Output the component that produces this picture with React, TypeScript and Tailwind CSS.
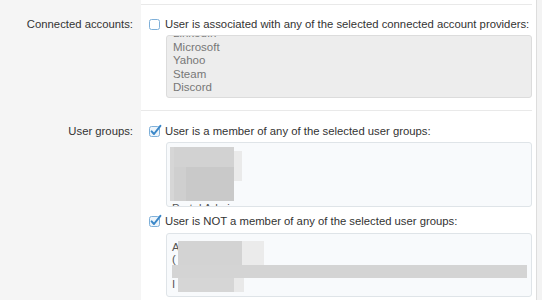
import React from "react";

const font = { fontFamily: '"Liberation Sans", Arial, sans-serif' };

function Check({ checked }: { checked?: boolean }) {
  return (
    <svg width="12" height="12" viewBox="0 0 12 12" className="shrink-0 overflow-visible">
      <rect x="0.5" y="1.5" width="10" height="10" rx="2" fill={checked ? "#eef5fb" : "#ffffff"} stroke="#7fb0d9" />
      {checked && (
        <path d="M2.6 6.4 L5 9 L11.4 0.8" fill="none" stroke="#3b87c8" strokeWidth="2" strokeLinecap="round" strokeLinejoin="round" />
      )}
    </svg>
  );
}

const providers = ["LinkedIn", "Microsoft", "Yahoo", "Steam", "Discord"];

export default function App() {
  return (
    <div className="w-[542px] h-[300px] overflow-hidden flex bg-[#f5f5f5] text-[11.3px] text-[#333]" style={font}>
      <div className="w-[536px] flex flex-col">
        {/* top strip */}
        <div className="flex h-[5px]">
          <div className="w-[141px] bg-[#f5f5f5]" />
          <div className="flex-1 bg-white pr-[4px]">
            <div className="h-[5px] border-b border-[#e9e9e9]" />
          </div>
        </div>

        {/* connected accounts */}
        <div className="flex h-[106px]">
          <div className="w-[141px] bg-[#f5f5f5] pr-[8px] pt-[12px] text-right leading-[14px]">Connected accounts:</div>
          <div className="flex-1 bg-white pr-[4px]">
            <div className="h-full border-b border-[#e9e9e9] pl-[8px] pt-[12px]">
              <div className="flex items-center gap-[4px] leading-[14px] whitespace-nowrap">
                <Check />
                <span>User is associated with any of the selected connected account providers:</span>
              </div>
              <div className="ml-[17px] mt-[4px] h-[63px] overflow-hidden rounded-[3px] border border-[#dcdcdc] bg-[#ededed] pl-[6px] text-[11.5px] text-[#777]">
                <div className="-mt-[9px] leading-[13.6px]">
                  {providers.map((p) => (
                    <div key={p}>{p}</div>
                  ))}
                </div>
              </div>
            </div>
          </div>
        </div>

        {/* user groups */}
        <div className="flex flex-1">
          <div className="w-[141px] bg-[#f5f5f5] pr-[8px] pt-[13px] text-right leading-[14px]">User groups:</div>
          <div className="flex-1 bg-white pr-[4px] pl-[8px] pt-[13px]">
            <div className="flex items-center gap-[4px] leading-[14px] whitespace-nowrap">
              <Check checked />
              <span>User is a member of any of the selected user groups:</span>
            </div>
            <div className="ml-[17px] mt-[4px] h-[65px] overflow-hidden rounded-[3px] border border-[#dfe4e8] bg-[#f8fafc] pl-[3px] pt-[4px] text-[#777]">
              <div className="flex h-[54px] w-[72px]">
                <div className="w-[12px] bg-[#d6d6d6]" />
                <div className="flex w-[60px] flex-col">
                  <div className="h-[20px] bg-[#d2d2d2]" />
                  <div className="flex h-[34px]">
                    <div className="w-[12px] bg-[#cfcfcf]" />
                    <div className="w-[48px] bg-[#c9c9c9]" />
                  </div>
                </div>
                <div className="mt-[4px] h-[30px] w-[22px] bg-[#eaeaea]" />
              </div>
              <div className="pl-[2px] pt-[1px] leading-[13px] text-[#555]">Portal Admin</div>
            </div>

            <div className="mt-[7px] flex items-center gap-[4px] leading-[14px] whitespace-nowrap">
              <Check checked />
              <span>User is NOT a member of any of the selected user groups:</span>
            </div>
            <div className="ml-[17px] mt-[5px] h-[64px] overflow-hidden rounded-[3px] border border-[#dfe4e8] bg-[#f8fafc] pl-[5px] pr-[4px] pt-[7px] text-[#555]">
              <div className="flex h-[24px]">
                <div className="w-[6px] leading-[12px]">A<br />(</div>
                <div className="w-[64px] bg-[#d3d3d3]" />
                <div className="w-[22px] bg-[#ebebeb]" />
              </div>
              <div className="h-[13px] bg-[#d4d4d4]" />
              <div className="flex h-[14px]">
                <div className="w-[6px] leading-[12px]">I</div>
                <div className="w-[56px] bg-[#d6d6d6]" />
                <div className="w-[10px] bg-[#e9e9e9]" />
              </div>
            </div>
          </div>
        </div>
      </div>
      <div className="w-[6px] border-l border-[#dddddd] bg-[#f3f3f3]" />
    </div>
  );
}
